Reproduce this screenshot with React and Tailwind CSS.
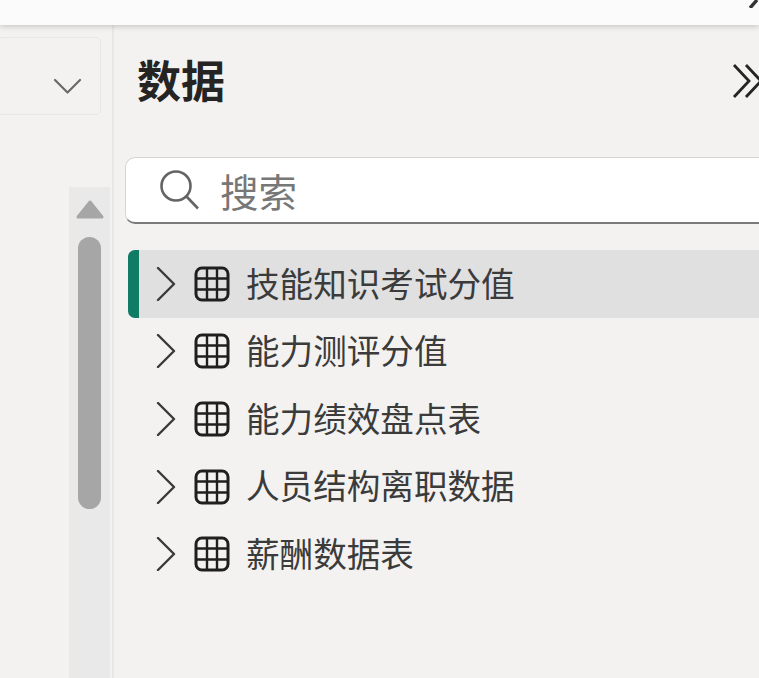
const FONT = "font-['Noto_Sans_CJK_SC','Noto_Sans',sans-serif]";

const tables = ["技能知识考试分值", "能力测评分值", "能力绩效盘点表", "人员结构离职数据", "薪酬数据表"];

function Chevron() {
  return (
    <svg width="20" height="34" viewBox="0 0 20 34" fill="none" stroke="#3a3a3a" strokeWidth="2.4" className="shrink-0">
      <path d="M2 1 L18 17 L2 33" strokeLinecap="round" strokeLinejoin="round" />
    </svg>
  );
}

function TableIcon() {
  return (
    <svg width="36" height="36" viewBox="0 0 36 36" fill="none" stroke="#1f1f1f" className="shrink-0">
      <rect x="2" y="2" width="32" height="32" rx="6" strokeWidth="3" />
      <path d="M13 2 V34 M23 2 V34 M2 12.5 H34 M2 23.5 H34" strokeWidth="2.4" />
    </svg>
  );
}

function TableRow({ name, active }) {
  return (
    <div className="flex h-[67.6px] items-stretch">
      <div className={`w-[11px] shrink-0 rounded-l-[7px] ${active ? "bg-[#107c66]" : ""}`} />
      <div className={`flex flex-1 items-center ${active ? "bg-[#e0e0e0]" : ""}`}>
        <div className="ml-[17px] w-[38px]">
          <Chevron />
        </div>
        <TableIcon />
        <span className="ml-[16px] mb-[3px] whitespace-nowrap text-[33.6px] leading-none text-[#3b3b3b]">{name}</span>
      </div>
    </div>
  );
}

export default function App() {
  return (
    <div className={`flex h-[678px] w-[759px] flex-col overflow-hidden bg-[#f3f2f1] ${FONT}`}>
      {/* Top bar */}
      <div className="relative z-10 flex h-[25px] shrink-0 justify-end overflow-hidden bg-[#fbfbfb] shadow-[0_1px_6px_rgba(0,0,0,0.22)]">
        <svg width="10" height="8" viewBox="0 0 10 8" fill="none" stroke="#333" strokeWidth="3.4" className="shrink-0">
          <path d="M1 8 L8 0" />
        </svg>
      </div>

      <div className="flex min-h-0 flex-1">
        {/* Left panel */}
        <div className="flex w-[114px] shrink-0 flex-col border-r-2 border-[#e8e7e6]">
          <div className="mt-[12px] mr-[11px] flex h-[78px] items-end justify-end rounded-r-[5px] border border-l-0 border-[#e8e7e6] pr-[18px] pb-[20px]">
            <svg width="29" height="16" viewBox="0 0 29 16" fill="none" stroke="#6a6a6a" strokeWidth="2.2">
              <path d="M2 2 L14.5 14.5 L27 2" strokeLinecap="round" strokeLinejoin="round" />
            </svg>
          </div>
          <div className="mt-[72px] mr-[2px] ml-[69px] flex flex-1 flex-col items-center bg-[#e9e9e9] pt-[13px]">
            <svg width="28" height="19" viewBox="0 0 28 19" className="shrink-0">
              <path d="M14 2 L26 17 H2 Z" fill="#a6a6a6" stroke="#a6a6a6" strokeWidth="3" strokeLinejoin="round" />
            </svg>
            <div className="mt-[18px] h-[272px] w-[23px] rounded-full bg-[#a6a6a6]" />
          </div>
        </div>

        {/* Data pane */}
        <div className="min-w-0 flex-1 pl-[12px]">
          <div className="flex h-[132px] items-start justify-between">
            <h2 className="mt-[27px] ml-[11px] text-[44px] leading-[54px] font-bold whitespace-nowrap text-[#252423]">数据</h2>
            <svg width="28" height="36" viewBox="0 0 28 36" fill="none" stroke="#252423" strokeWidth="2.8" className="mt-[38px] -mr-[1px] shrink-0">
              <path d="M2 2 L17 18 L2 34 M14 2 L29 18 L14 34" />
            </svg>
          </div>
          <div className="-ml-[1px] flex h-[67px] w-[660px] items-center rounded-l-[10px] border border-r-0 border-[#d5d5d5] border-b-[2px] border-b-[#7a7a7a] bg-white pl-[33px]">
            <svg width="42" height="42" viewBox="0 0 42 42" fill="none" stroke="#646464" strokeWidth="2.6" className="shrink-0">
              <circle cx="17" cy="17" r="14.5" />
              <path d="M27.5 27.5 L39 39.5" />
            </svg>
            <span className="ml-[19px] text-[38.5px] leading-none whitespace-nowrap text-[#777777]">搜索</span>
          </div>
          <div className="mt-[26px] ml-[2px]">
            {tables.map((name, i) => (
              <TableRow key={name} name={name} active={i === 0} />
            ))}
          </div>
        </div>
      </div>
    </div>
  );
}
